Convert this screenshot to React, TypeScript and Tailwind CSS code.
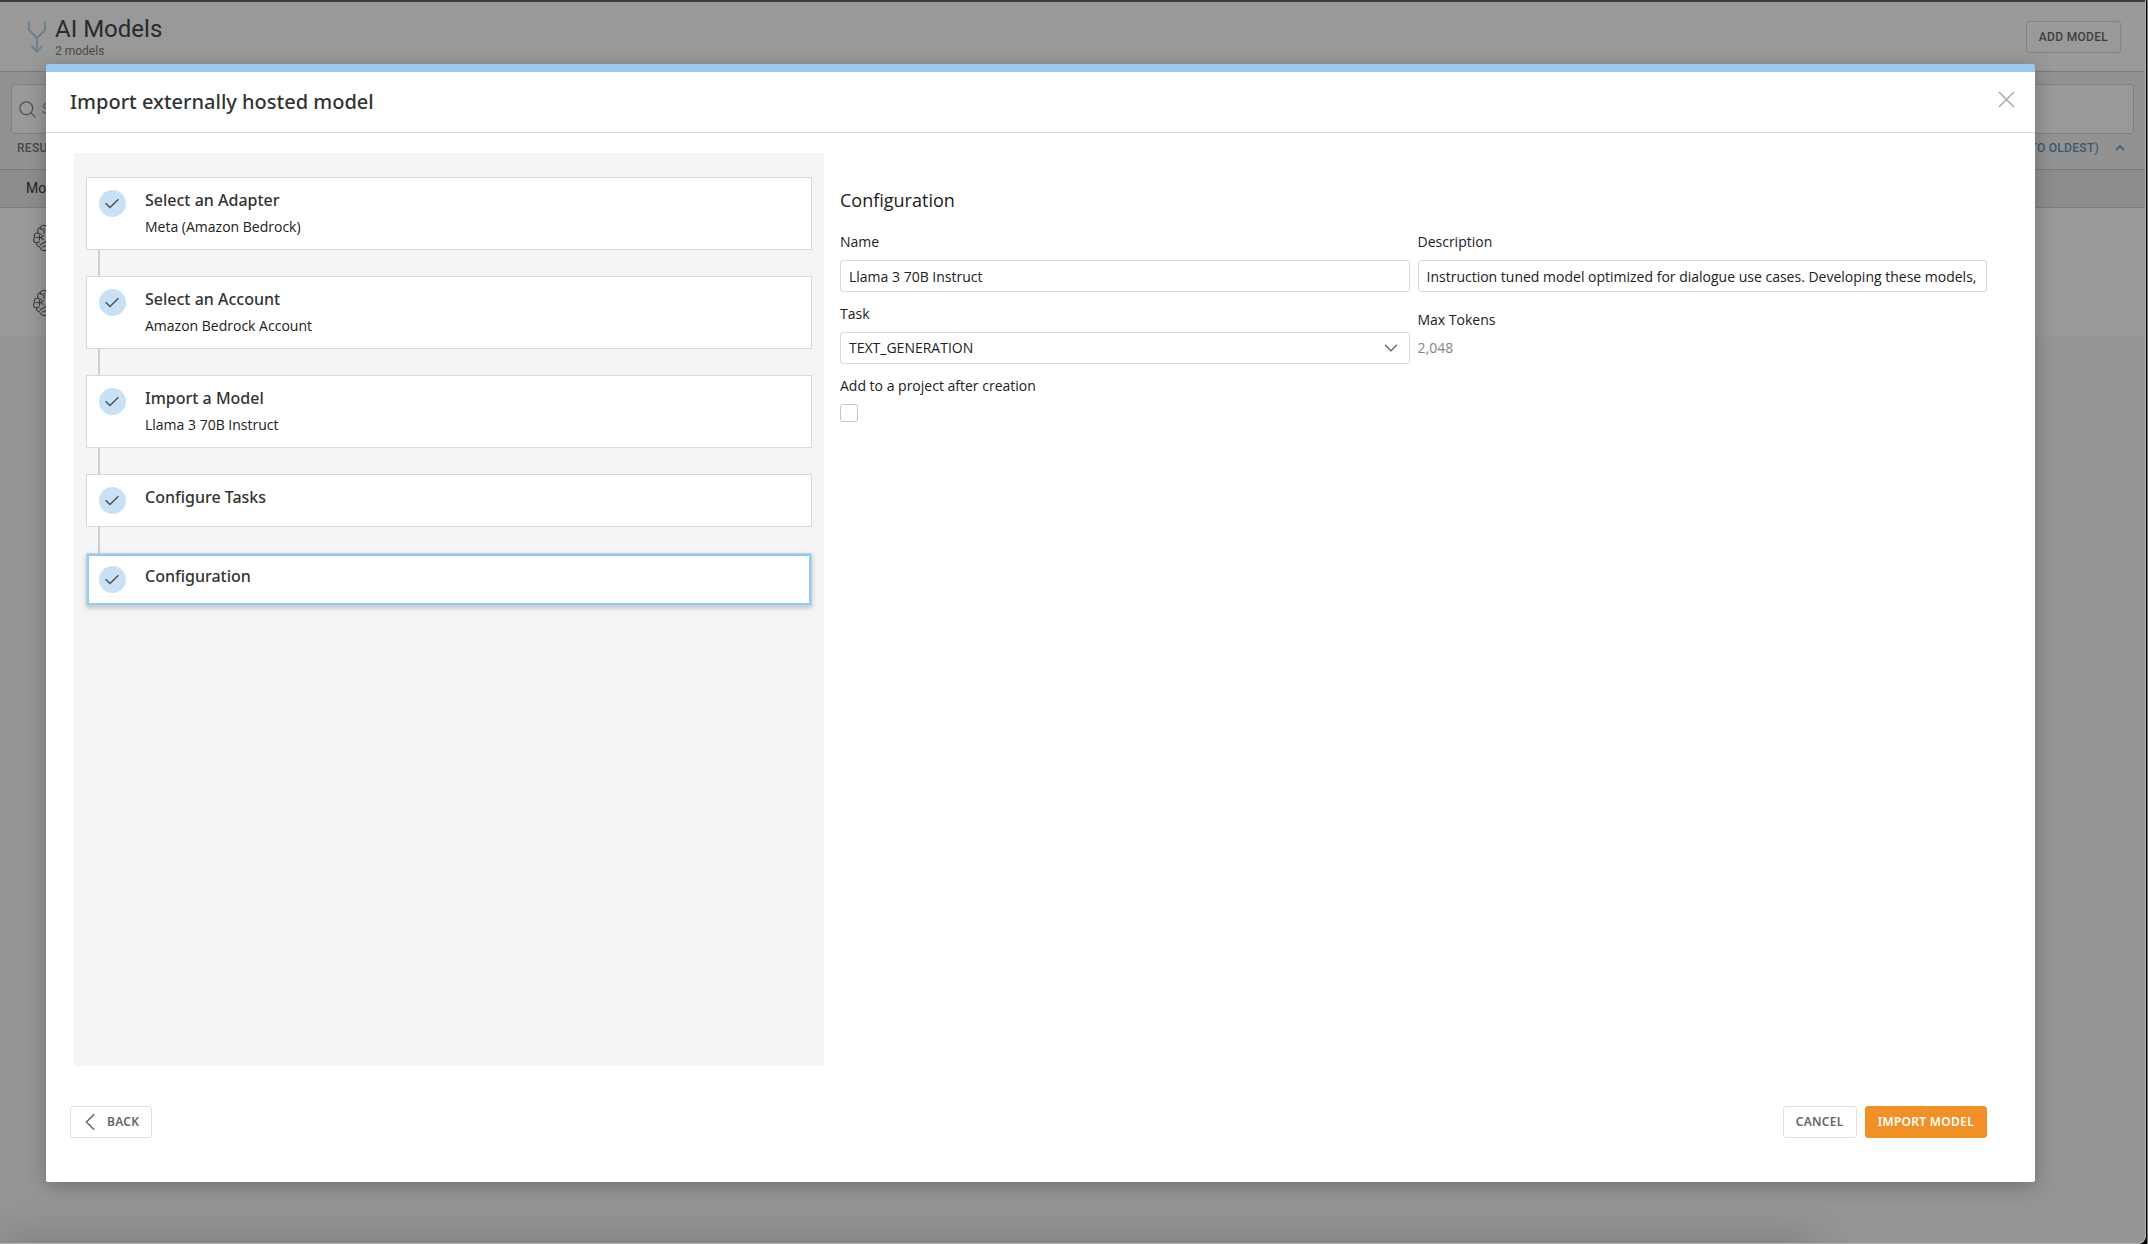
import { useState } from "react";

interface Step {
  title: string;
  detail?: string;
}

const steps: Step[] = [
  { title: "Select an Adapter", detail: "Meta (Amazon Bedrock)" },
  { title: "Select an Account", detail: "Amazon Bedrock Account" },
  { title: "Import a Model", detail: "Llama 3 70B Instruct" },
  { title: "Configure Tasks" },
  { title: "Configuration" },
];

const fieldClass =
  "block h-8 w-full rounded-[3px] border border-[#d9d9d9] bg-white px-2 text-sm text-[#212121] outline-none focus:border-[#98caec]";
const buttonClass =
  "h-8 rounded-[3px] border px-3 text-xs font-semibold tracking-wide";

export default function App() {
  return (
    <div className="flex min-h-screen border-r border-[#7d7d7d] bg-black pr-px">
      <div className="relative flex flex-1 flex-col overflow-hidden rounded-br-lg border-r border-b border-[#b3b3b3] bg-[#f8f8f8]">
        <ModelsPage />
        <div className="absolute inset-0 flex bg-black/40 pt-16 pr-[110px] pb-[61px] pl-[46px]">
          <ImportDialog />
        </div>
        <div className="absolute top-full right-[330px] left-0 h-4 shadow-[0_0_40px_rgba(0,0,0,0.3)]" />
      </div>
    </div>
  );
}

function ModelsPage() {
  return (
    <div className="font-['Roboto',sans-serif]">
      <div className="h-0.5 bg-[#666]" />
      <header className="flex h-[70px] items-center gap-2 border-b border-[#d3d3d3] bg-white pr-6 pl-7">
        <ModelsIcon />
        <div className="flex-1">
          <h1 className="text-2xl leading-7 text-[#484848]">AI Models</h1>
          <p className="text-xs text-[#7d7d7d]">2 models</p>
        </div>
        <button
          type="button"
          className="h-8 rounded-[3px] border border-[#dcdcdc] px-3 text-xs font-medium tracking-wide text-[#6b6b6b]"
        >
          ADD MODEL
        </button>
      </header>

      <div className="border-b border-[#cacaca] bg-[#f4f4f4] px-[11px] pt-3 shadow-sm">
        <label className="flex h-[50px] items-center gap-1.5 rounded-[3px] border border-[#d6d6d6] bg-white px-[7px] text-[#868686]">
          <svg
            className="size-[17px]"
            viewBox="0 0 17 17"
            fill="none"
            stroke="currentColor"
            strokeWidth="1.2"
            strokeLinecap="round"
            aria-hidden
          >
            <circle cx="7.3" cy="7.3" r="6.4" />
            <path d="M12.2 12.2 16 16" />
          </svg>
          <input
            type="text"
            aria-label="Search models"
            placeholder="Search"
            className="flex-1 bg-transparent text-sm outline-none placeholder:text-[#a0a0a0]"
          />
        </label>
        <div className="flex h-[35px] items-start justify-between pt-1.5 pr-[9px] pl-1.5 text-xs font-medium tracking-wide">
          <span className="text-[#7a7a7a]">RESULTS</span>
          <button
            type="button"
            className="flex items-center gap-4 tracking-wide text-[#5c98c4]"
          >
            CREATED (NEWEST TO OLDEST)
            <svg
              className="h-1.5 w-[10px]"
              viewBox="0 0 10 6"
              fill="none"
              stroke="currentColor"
              strokeWidth="1.6"
              aria-hidden
            >
              <path d="M1 5.2 5 1.2l4 4" />
            </svg>
          </button>
        </div>
      </div>

      <table className="w-full border-collapse text-left">
        <thead className="bg-[#ececec]">
          <tr className="h-[37px] border-b border-[#d0d0d0]">
            <th className="pl-[26px] text-sm font-normal text-[#3c3c3c]">
              Model
            </th>
          </tr>
        </thead>
        <tbody className="bg-white">
          {[0, 1].map((i) => (
            <tr key={i} className="h-[65px]">
              <td className="pb-1 pl-8 text-[#666]">
                <BrainIcon />
              </td>
            </tr>
          ))}
        </tbody>
      </table>
    </div>
  );
}

function ImportDialog() {
  return (
    <section
      role="dialog"
      aria-labelledby="dialog-title"
      className="flex flex-1 flex-col rounded-xs border-t-8 border-[#98caec] bg-white font-['Open_Sans',sans-serif] shadow-[0_4px_20px_rgba(0,0,0,0.25)]"
    >
      <header className="flex h-[61px] items-center justify-between border-b border-[#dadada] pr-5 pl-6">
        <h2
          id="dialog-title"
          className="font-['Noto_Sans',sans-serif] text-xl font-medium text-[#333]"
        >
          Import externally hosted model
        </h2>
        <button type="button" aria-label="Close" className="pb-1.5 text-[#ababab]">
          <svg
            className="size-[17px]"
            viewBox="0 0 17 17"
            fill="none"
            stroke="currentColor"
            strokeWidth="1.5"
            aria-hidden
          >
            <path d="m1 1 15 15M16 1 1 16" />
          </svg>
        </button>
      </header>

      <div className="grid flex-1 grid-cols-[750fr_1147fr] gap-4 pt-5 pr-12 pl-7">
        <StepList />
        <ConfigurationForm />
      </div>

      <footer className="flex items-center gap-2 pt-10 pr-12 pb-11 pl-6 font-['Noto_Sans',sans-serif]">
        <button
          type="button"
          className={`${buttonClass} mr-auto flex items-center gap-3 border-[#e0e0e0] text-[#666]`}
        >
          <svg
            className="ml-0.5 h-[18px] w-[10px]"
            viewBox="0 0 10 18"
            fill="none"
            stroke="currentColor"
            strokeWidth="1.5"
            aria-hidden
          >
            <path d="M9.2 1.2 1.4 9l7.8 7.8" />
          </svg>
          BACK
        </button>
        <button
          type="button"
          className={`${buttonClass} border-[#e0e0e0] text-[#666]`}
        >
          CANCEL
        </button>
        <button
          type="button"
          className={`${buttonClass} border-[#f19026] bg-[#f19026] text-white`}
        >
          IMPORT MODEL
        </button>
      </footer>
    </section>
  );
}

function StepList() {
  const [active, setActive] = useState(steps.length - 1);

  return (
    <ol className="bg-[#f5f5f5] px-3 pt-6">
      {steps.map((step, i) => (
        <li key={step.title}>
          {i > 0 ? <div className="ml-3 h-[26px] w-0.5 bg-[#cfcfcf]" /> : null}
          <button
            type="button"
            onClick={() => setActive(i)}
            className={`flex w-full items-start gap-[19px] border bg-white px-3 pt-2.5 pb-3 text-left ${
              i === active
                ? "border-[#b5d6ea] shadow-[inset_0_0_0_2px_#98caec,0_2px_5px_rgba(0,0,0,0.2)]"
                : "border-[#d9d9d9]"
            }`}
          >
            <svg
              className="mt-0.5 size-[27px] shrink-0"
              viewBox="0 0 27 27"
              fill="none"
              aria-hidden
            >
              <circle cx="13.5" cy="13.5" r="13.5" fill="#c9e1f5" />
              <path
                d="m6.6 13.3 4.4 4.2 8.4-8.2"
                stroke="#4a4f54"
                strokeWidth="1.4"
              />
            </svg>
            <span>
              <span className="block font-['Noto_Sans',sans-serif] text-base font-medium text-[#333]">
                {step.title}
              </span>
              {step.detail ? (
                <span className="mt-[5px] block text-sm text-[#212121]">
                  {step.detail}
                </span>
              ) : null}
            </span>
          </button>
        </li>
      ))}
    </ol>
  );
}

function ConfigurationForm() {
  const [addToProject, setAddToProject] = useState(false);

  return (
    <form className="pt-[33px] text-sm text-[#212121]">
      <h3 className="mb-[18px] text-lg">Configuration</h3>
      <div className="grid grid-cols-2 gap-x-2 gap-y-3">
        <div className="flex flex-col gap-2">
          <label htmlFor="name">Name</label>
          <input
            id="name"
            type="text"
            defaultValue="Llama 3 70B Instruct"
            className={fieldClass}
          />
        </div>
        <div className="flex flex-col gap-2">
          <label htmlFor="description">Description</label>
          <input
            id="description"
            type="text"
            defaultValue="Instruction tuned model optimized for dialogue use cases. Developing these models,"
            className={fieldClass}
          />
        </div>
        <div className="flex flex-col gap-2">
          <label htmlFor="task">Task</label>
          <div className="relative">
            <select id="task" className={`${fieldClass} appearance-none`}>
              <option>TEXT_GENERATION</option>
            </select>
            <svg
              className="pointer-events-none absolute top-3 right-3 h-2 w-[14px]"
              viewBox="0 0 14 8"
              fill="none"
              stroke="#666"
              strokeWidth="1.3"
              aria-hidden
            >
              <path d="m1 .8 6 6 6-6" />
            </svg>
          </div>
        </div>
        <div className="flex flex-col gap-2 pt-1.5">
          <span>Max Tokens</span>
          <span className="text-[#858585]">2,048</span>
        </div>
        <div className="flex flex-col gap-2">
          <label htmlFor="add-to-project">Add to a project after creation</label>
          <input
            id="add-to-project"
            type="checkbox"
            checked={addToProject}
            onChange={(e) => setAddToProject(e.target.checked)}
            className="size-[18px] appearance-none rounded-[3px] border border-[#c4c4c4] bg-white checked:bg-[#98caec]"
          />
        </div>
      </div>
    </form>
  );
}

function ModelsIcon() {
  return (
    <svg
      className="h-8 w-[19px]"
      viewBox="0 0 19 32"
      fill="none"
      stroke="#b2d8f0"
      strokeWidth="2"
      strokeLinecap="round"
      strokeLinejoin="round"
      aria-hidden
    >
      <path d="M1 1v8l8 8v13.5M17 1v8l-8 8" />
      <path d="M4 25.5l5 5 5-5" />
    </svg>
  );
}

function BrainIcon() {
  return (
    <svg
      className="block h-7 w-[30px]"
      viewBox="0 0 30 28"
      fill="none"
      stroke="currentColor"
      strokeWidth="1.1"
      strokeLinecap="round"
      aria-hidden
    >
      <path d="M15 2.5C13 .8 9 1 8.4 3.6 5.6 3.8 5 7 6.2 9 3 8.6 1.6 11 2.6 13.4.4 15.4 1.6 19 5 18.8c-1 2 .4 4 2.6 4C8 26 12.5 28 15 25.5" />
      <path d="M8.4 3.6c0 1.2.8 2 2 2M12 4v5.500M6.2 9c.6 1.2 2 1.6 3.2 1M4 13.5h3.5M7.5 11.5V16M11.5 11.5l-3 2 3 2M14.500 17 8 21M5 18.8l2.5-1M14.500 21.5l-4 1.5" />
      <path d="M15 2.5c2-1.7 6-1.5 6.6 1.1 2.8.2 3.4 3.4 2.2 5.4 3.2-.4 4.6 2 3.6 4.4 2.2 2 1 5.6-2.4 5.4 1 2-.4 4-2.6 4-.4 3.2-4.9 5.2-7.400 2.7" />
    </svg>
  );
}
